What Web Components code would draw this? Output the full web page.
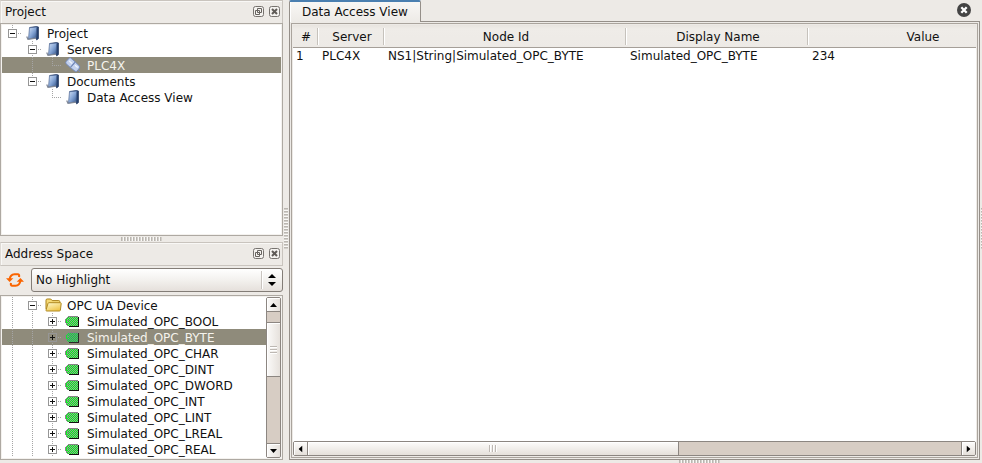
<!DOCTYPE html>
<html lang="en"><head><meta charset="utf-8"><title>OPC UA client</title>
<style>
html,body{margin:0;height:463px;overflow:hidden}
body{background:#edeae6;font:12px/16px "DejaVu Sans",sans-serif;color:#111}
</style></head><body>
<ua-app></ua-app>
<script>
function define(name, html, init){
  customElements.define(name, class extends HTMLElement{
    connectedCallback(){
      if(this.shadowRoot) return;
      const root=this.attachShadow({mode:'open'});
      const t=document.createElement('template');
      t.innerHTML='<style>*{box-sizing:border-box}</style>'+html;
      root.append(t.content.cloneNode(true));
      if(init) init(this,root);
    }
  });
}

/* Ridged splitter handle */
define('ua-grip',`<style>
:host{display:block;width:41px;height:4px;flex:none;background:repeating-linear-gradient(90deg,#bab6b0 0 1px,#d3d0cb 1px 2px,#faf9f7 2px 3px)}
:host([vertical]){width:4px;height:41px;background:repeating-linear-gradient(180deg,#bab6b0 0 1px,#d3d0cb 1px 2px,#faf9f7 2px 3px)}
</style>`);

/* Dithered pixels for the body of the tag icon */
let dots='';
for(let y=1;y<10;y++) for(let x=2;x<13;x++) if((x+y)%2) dots+=`M${x} ${y}h1v1h-1z`;

const glyphs={
project:`<svg width="14" height="15" viewBox="0 0 14 15"><defs><linearGradient id="g" x1="0" y1="0" x2="1" y2="1"><stop offset="0" stop-color="#d7e4f7"/><stop offset=".5" stop-color="#86a6d6"/><stop offset="1" stop-color="#35588f"/></linearGradient></defs><path d="M3.5 1.5 10.5.5 12.5 1v11.5l-1.8 1.5-.8-2" fill="#24406f" stroke="#243a62" stroke-width=".7"/><path d="M3.5 1.8 10.8.9 10 11.8 2.5 13z" fill="url(#g)" stroke="#4c6593" stroke-width=".7"/><path d="M.7 10.5 2 13.4 10 12.2" fill="none" stroke="#7f8796" stroke-width="1.3"/></svg>`,
plug:`<svg width="16" height="16" viewBox="0 0 16 16"><g fill="#c3d1ee" stroke="#7189c0" stroke-width=".9"><path d="M5.6.9 10 4.8 5.2 10.4 1 6.6Q.4 5.7 1.2 4.5L3.9 1.4Q4.8.4 5.6.9Z"/><path d="M10.4 5.2 14.4 9Q15.2 10 14.4 11.1L12.1 14Q11.1 15 10.1 14.2L5.6 10.7Z"/></g><path d="m4 3.8 3 2.8m3 1.6 2.7 2.4" stroke="#eef3fc" stroke-width="1.3"/><path d="M13.5 13.5 15 15" stroke="#7189c0"/></svg>`,
folder:`<svg width="17" height="14" viewBox="0 0 17 14"><defs><linearGradient id="f" y2="1" x2=".6"><stop stop-color="#fffbd0"/><stop offset="1" stop-color="#efc64c"/></linearGradient></defs><path d="M1 11V2.2Q1 1 2.2 1h3.5L7.2 2.6h6.6q1 0 1 1V6" fill="#f6da76" stroke="#a98118"/><path d="M1 12.2 3 5.4Q3.2 4.7 4 4.7h11.4q.9 0 .8.9l-.8 6.5q-.1.9-1 .9H1.7Q.8 13 1 12.2Z" fill="url(#f)" stroke="#b18a22"/></svg>`,
tag:`<svg width="14" height="11" viewBox="0 0 14 11" shape-rendering="crispEdges"><path fill="#111" d="M4 10h9V1h1v10H4z"/><path fill="#00ff18" d="M3 1h10v9H3V9H2V8H1V3h1V2h1z"/><path style="fill:var(--dither,#989898)" d="${dots}"/><path fill="#858585" d="M3 0h10v1H3zM2 1h1v1H2zM1 2h1v1H1zM0 3h1v4H0zM1 7h1v2H1zM2 9h1v1H2z"/><path fill="#888" d="M2 4h2v1H2z"/></svg>`,
float:`<svg width="11" height="11" viewBox="0 0 11 11"><rect x=".5" y=".5" width="10" height="10" rx="2" fill="#f4f2ef" stroke="#77736f"/><path d="M4.5 2.5h4v4h-4zM2.5 4.5h4v4h-4z" fill="none" stroke="#67635f"/></svg>`,
close:`<svg width="11" height="11" viewBox="0 0 11 11"><rect x=".5" y=".5" width="10" height="10" rx="2" fill="#f4f2ef" stroke="#77736f"/><path d="m3 3 5 5m0-5L3 8" stroke="#5f5b57" stroke-width="2"/></svg>`,
refresh:`<svg width="18" height="16" viewBox="0 0 18 16"><g fill="none" stroke="#fa6400" stroke-width="2.1"><path d="M3.6 7.5Q4.2 2.4 8.5 2.2H12Q13.6 2.4 13 5"/><path d="M14.4 8.5Q13.8 13.6 9.5 13.8H6Q4.4 13.6 5 11"/></g><path fill="#fa6400" d="M0 6.2h7.3L3.6 10zM10.7 9.8h7.3L14.4 6z"/></svg>`,
tabclose:`<svg width="14" height="14" viewBox="0 0 14 14"><circle cx="7" cy="7" r="7" fill="#444"/><path d="m4.3 4.3 5.4 5.4m0-5.4L4.3 9.7" stroke="#fff" stroke-width="2.3"/></svg>`
};
define('ua-icon',`<style>:host{display:flex;flex:none;align-items:center}svg{display:block}</style>`,(h,r)=>{
  const t=document.createElement('template');t.innerHTML=glyphs[h.getAttribute('name')];r.append(t.content);
});

/* Dock title bar */
define('ua-title',`<style>
:host{display:flex;align-items:center;gap:5px;height:24px;padding:0 2px 1px 5px;border:1px solid #c9c4be;border-left-color:#dedad5;box-shadow:inset 1px 1px #f9f8f6;flex:none}
span{flex:1;margin:1px 0 0 -1px}
</style><span><slot></slot></span><ua-icon name="float"></ua-icon><ua-icon name="close"></ua-icon>`);

/* Tree row: each character of guides is one 20px indent cell */
define('ua-row',`<style>
:host{display:flex;height:16px;align-items:center;white-space:nowrap;flex:none}
:host([selected]){background:#8f8b7b;color:#f5f3ed;--dither:#5f7f98}
.guide{width:20px;height:16px;flex:none;display:flex;justify-content:center;align-items:center;padding-right:1px}
.line{background:repeating-linear-gradient(180deg,#a5a5a5 0 1px,transparent 1px 2px) 10px 0/1px 16px no-repeat}
.link{background-image:repeating-linear-gradient(180deg,#a5a5a5 0 1px,transparent 1px 2px),repeating-linear-gradient(90deg,#a5a5a5 0 1px,transparent 1px 2px);background-position:10px 0,10px 8px;background-size:1px var(--h,16px),10px 1px;background-repeat:no-repeat}
.box{width:9px;height:9px;border:1px solid #969696;margin-left:2px;background:linear-gradient(#111,#111) 1px 3px/5px 1px no-repeat,#fff}
.plus{background:linear-gradient(#111,#111) 1px 3px/5px 1px no-repeat,linear-gradient(#111,#111) 3px 1px/1px 5px no-repeat,#fff}
:host([selected]) .plus{background-color:#8f8b7b}
:host([selected]) ua-icon[name=tag]{opacity:.8}
.ico{width:25px;padding-left:3px;display:flex;align-items:center;flex:none}
ua-icon[name=tag]{margin-top:1px}
ua-icon[name=project]{margin:1px 0 0 1px}
.t{margin-top:2px}
</style>`,(h,r)=>{
  const g=(h.getAttribute('guides')||'').split('');
  let s='';
  for(const c of g){
    if(c==='.') s+='<i class="guide"></i>';
    if(c==='|') s+='<i class="guide line"></i>';
    if(c==='L') s+='<i class="guide link" style="--h:8px"></i>';
    if(c==='-') s+='<i class="guide link" style="--h:8px"><b class="box"></b></i>';
    if(c==='=') s+='<i class="guide link"><b class="box"></b></i>';
    if(c==='+') s+='<i class="guide link"><b class="box plus"></b></i>';
  }
  const n=h.getAttribute('icon');
  const t=document.createElement('template');
  t.innerHTML=s+`<span class="ico"><ua-icon name="${n}"></ua-icon></span><span class="t"><slot></slot></span>`;
  r.append(t.content);
});

define('ua-tree',`<style>
:host{display:flex;border:1px solid #aea9a2;background:#fff;min-height:0;overflow:hidden;box-shadow:inset 0 0 0 1px #f4f2ef;padding:1px}
div{flex:1;min-width:0;display:flex;flex-direction:column;overflow:hidden}
</style><div><slot></slot></div><slot name="bar"></slot>`);

/* Scrollbar: before = track ahead of the thumb, size = thumb length */
define('ua-scroll',`<style>
:host{display:flex;flex-direction:column;flex:none;width:15px;border:1px solid #8c8681;border-radius:2px;background:#d7cdc4;overflow:hidden}
:host([horizontal]){flex-direction:row;width:auto;height:15px;box-sizing:border-box}
.b,.t{background:linear-gradient(90deg,#fbfaf9,#e6e1dc);display:flex;align-items:center;justify-content:center;flex:none;box-shadow:inset 1px 1px #fff}
.b{height:14px;border-bottom:1px solid #8c8681}.b:last-child{border-bottom:0;border-top:1px solid #8c8681}
.t{height:var(--size);margin-top:var(--before);border:1px solid #8c8681;border-width:1px 0}
.e{flex:1}
.m{width:7px;height:8px;background:repeating-linear-gradient(180deg,#bdb8b3 0 1px,#fff 1px 2px,transparent 2px 3px)}
:host([horizontal]) .b,:host([horizontal]) .t{background:linear-gradient(#fdfcfb,#e5e0da)}
:host([horizontal]) .b{width:14px;height:auto;border:0;border-right:1px solid #8c8681}
:host([horizontal]) .b:last-child{border-right:0;border-left:1px solid #8c8681}
:host([horizontal]) .t{height:auto;width:var(--size);margin:0 0 0 var(--before);border-width:0 1px 0 0}
:host([horizontal]) .m{width:8px;height:7px;background:repeating-linear-gradient(90deg,#bdb8b3 0 1px,#fff 1px 2px,transparent 2px 3px)}
:host([horizontal]) svg{transform:rotate(-90deg)}
</style><span class="b"><svg width="7" height="4"><path d="M0 4 3.5 0 7 4z"/></svg></span><span class="t"><i class="m"></i></span><span class="e"></span><span class="b"><svg width="7" height="4"><path d="M0 0 3.5 4 7 0z"/></svg></span>`);

define('ua-combo',`<style>
:host{display:flex;box-sizing:border-box;flex:1;height:24px;border:1px solid #837d77;border-radius:3px;background:linear-gradient(#fff,#f3f1ee 50%,#e5e0db);align-items:center;padding:0 6px 0 4px}
span{flex:1}i{height:18px;width:2px;background:#c9c4bf;border-right:1px solid #fff;margin-right:5px}
svg{display:block}
</style><span><slot></slot></span><i></i><svg width="8" height="12"><path d="M0 4 4 0 8 4zM0 8 4 12 8 8z"/></svg>`);

define('ua-table',`<style>
:host{flex:1;display:flex;flex-direction:column;background:#fff;overflow:hidden;min-width:0}
.r{display:grid;grid-template-columns:26px 66px 242px 182px 228px;flex:none}
.h{height:23px;background:linear-gradient(#e8e4df,#efece8 4px,#edeae6);border-bottom:1px solid #a59f98;line-height:24px;text-align:center}
.h span{height:22px;background:linear-gradient(#c6c2bc,#c6c2bc) calc(100% - 1px) 3px/1px 17px no-repeat,linear-gradient(#fff,#fff) 100% 3px/1px 17px no-repeat}
.d span{padding-left:3px;white-space:nowrap}
.x{flex:1}
</style><div class="r h"><span>#</span><span>Server</span><span>Node Id</span><span>Display Name</span><span>Value</span></div>
<div class="r d"><span>1</span><span>PLC4X</span><span>NS1|String|Simulated_OPC_BYTE</span><span>Simulated_OPC_BYTE</span><span>234</span></div><div class="x"></div>
<ua-scroll horizontal style="--size:371px;--before:0px"></ua-scroll>`);

define('ua-tabs',`<style>
:host{display:flex;flex-direction:column;width:691px;height:460px;flex:none}
.bar{display:flex;height:22px;justify-content:space-between;padding-right:9px;flex:none}
.tab{width:132px;height:22px;border:1px solid #958f89;border-top:2px solid #4a7fb0;border-bottom:0;border-radius:2px 2px 0 0;background:linear-gradient(#f8f7f5,#edeae6);padding:2px 0 0 12px;box-shadow:inset 1px 0 #fff;position:relative}
.bar ua-icon{height:20px}
.frame{flex:1;min-height:0;display:flex;border:1px solid #958f89;padding:1px;margin-top:-1px}
.inner{flex:1;min-width:0;display:flex;border:1px solid #aaa49d;padding:1px;background:#edeae6}
</style><div class="bar"><div class="tab"><slot></slot></div><ua-icon name="tabclose"></ua-icon></div>
<div class="frame"><div class="inner"><ua-table></ua-table></div></div>`);

const tags=['BOOL','BYTE','CHAR','DINT','DWORD','INT','LINT','LREAL','REAL'];
define('ua-app',`<style>
:host{display:flex;width:982px;height:463px;overflow:hidden}
.left{width:283px;height:460px;display:flex;flex-direction:column;flex:none}
.split{height:6px;display:flex;align-items:center;justify-content:center;flex:none}
.tool{display:flex;align-items:flex-start;height:29px;padding:2px 0 0 6px;gap:7px;flex:none}
.tool ua-icon{height:24px}
.v{width:6px;height:457px;display:flex;align-items:center;justify-content:center;flex:none}
.right{display:flex;flex-direction:column;align-items:center;flex:none}
</style>
<div class="left">
<ua-title>Project</ua-title>
<ua-tree style="height:213px;margin-top:-1px"><ua-row guides="-" icon="project">Project</ua-row><ua-row guides=".=" icon="project">Servers</ua-row><ua-row guides=".|L" icon="plug" selected>PLC4X</ua-row><ua-row guides=".-" icon="project">Documents</ua-row><ua-row guides="..L" icon="project">Data Access View</ua-row></ua-tree>
<div class="split"><ua-grip></ua-grip></div>
<ua-title>Address Space</ua-title>
<div class="tool"><ua-icon name="refresh"></ua-icon><ua-combo>No Highlight</ua-combo></div>
<ua-tree style="flex:1"><ua-row guides="|=" icon="folder">OPC UA Device</ua-row>${tags.map(t=>`<ua-row guides="||+" icon="tag"${t==='BYTE'?' selected':''}>Simulated_OPC_${t}</ua-row>`).join('')}<ua-scroll slot="bar" style="--before:10px;--size:55px"></ua-scroll></ua-tree>
</div>
<div class="v"><ua-grip vertical></ua-grip></div>
<div class="right"><ua-tabs>Data Access View</ua-tabs><ua-grip style="margin-left:129px"></ua-grip></div>
<div class="v"><ua-grip vertical></ua-grip></div>`);
</script>
</body></html>
